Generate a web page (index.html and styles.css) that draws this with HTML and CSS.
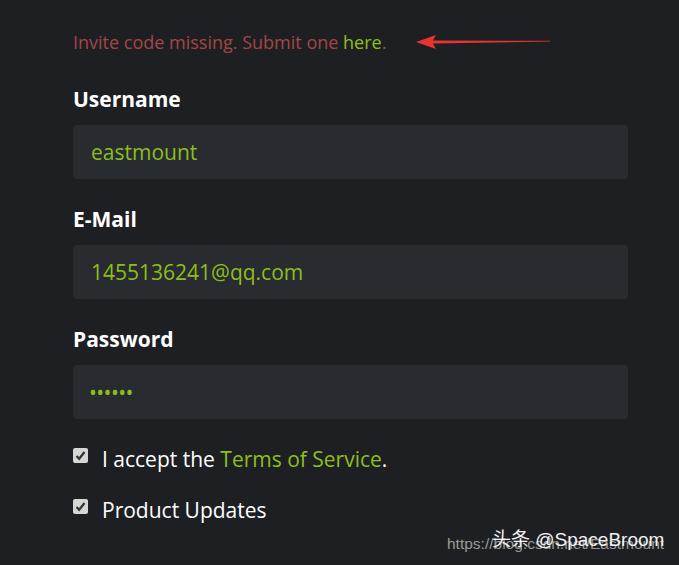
FILE: index.html
```html
<!DOCTYPE html>
<html lang="en">
<head>
  <meta charset="UTF-8">
  <title>Register</title>
  <link rel="stylesheet" href="styles.css">
</head>
<body>
  <div class="form">
    <p class="invite">Invite code missing. Submit one <a href="#">here</a>.</p>
    <svg class="arrow" width="140" height="16" viewBox="0 0 140 16">
      <path d="M2 8 L22 1 L19 6.5 L136 6.8 L136 7.6 L19 9.5 L22 15 Z" fill="#e8332f"/>
    </svg>

    <div class="field">
      <label>Username</label>
      <div class="box">eastmount</div>
    </div>
    <div class="field">
      <label>E-Mail</label>
      <div class="box">1455136241@qq.com</div>
    </div>
    <div class="field">
      <label>Password</label>
      <div class="box dots">••••••</div>
    </div>

    <div class="check">
      <span class="tick"><svg width="11" height="11" viewBox="0 0 11 11"><path d="M1.5 6 L4.2 8.8 L9.5 2" fill="none" stroke="#333" stroke-width="2.2"/></svg></span>
      <span>I accept the <a href="#">Terms of Service</a>.</span>
    </div>
    <div class="check">
      <span class="tick"><svg width="11" height="11" viewBox="0 0 11 11"><path d="M1.5 6 L4.2 8.8 L9.5 2" fill="none" stroke="#333" stroke-width="2.2"/></svg></span>
      <span>Product Updates</span>
    </div>
  </div>

  <div class="mark-url">https://blog.csdn.net/Eastmount</div>
  <div class="mark-name">头条 @SpaceBroom</div>
</body>
</html>
```

FILE: styles.css
```css
html, body { margin: 0; height: 100%; }
body { background: #1e1f23; font-family: "Open Sans", "Noto Sans", sans-serif; color: #fff; overflow: hidden; position: relative; }
a { color: #8cbf1a; text-decoration: none; }
.form { width: 555px; padding: 28px 0 0 73px; position: relative; }
.invite { margin: 0; font-size: 18px; line-height: 28px; color: #a54646; }
.arrow { position: absolute; left: 414px; top: 34px; }
.field { margin-top: 29px; }
.field + .field { margin-top: 26px; }
.field label { display: block; font-weight: 700; font-size: 21px; line-height: 28px; }
.box { margin-top: 12px; height: 54px; line-height: 54px; background: #282b30; border-radius: 4px; padding: 0 18px; font-size: 21px; color: #8cbf1a; }
.dots { padding-left: 16px; letter-spacing: -0.6px; }
.check { display: flex; align-items: center; gap: 14px; font-size: 21px; line-height: 28px; margin-top: 26px; }
.check + .check { margin-top: 23px; }
.tick { width: 15px; height: 15px; background: #d6d6d6; border-radius: 2px; display: flex; align-items: center; justify-content: center; margin-top: -8px; }
.mark-url { position: absolute; left: 447px; top: 535px; font-family: "Liberation Sans", sans-serif; font-size: 15.5px; color: #9a9a9a; }
.mark-name { position: absolute; left: 492px; top: 524px; font-family: "Liberation Sans", "Noto Sans CJK SC", sans-serif; font-size: 19px; color: #f2f2f2; }
```
